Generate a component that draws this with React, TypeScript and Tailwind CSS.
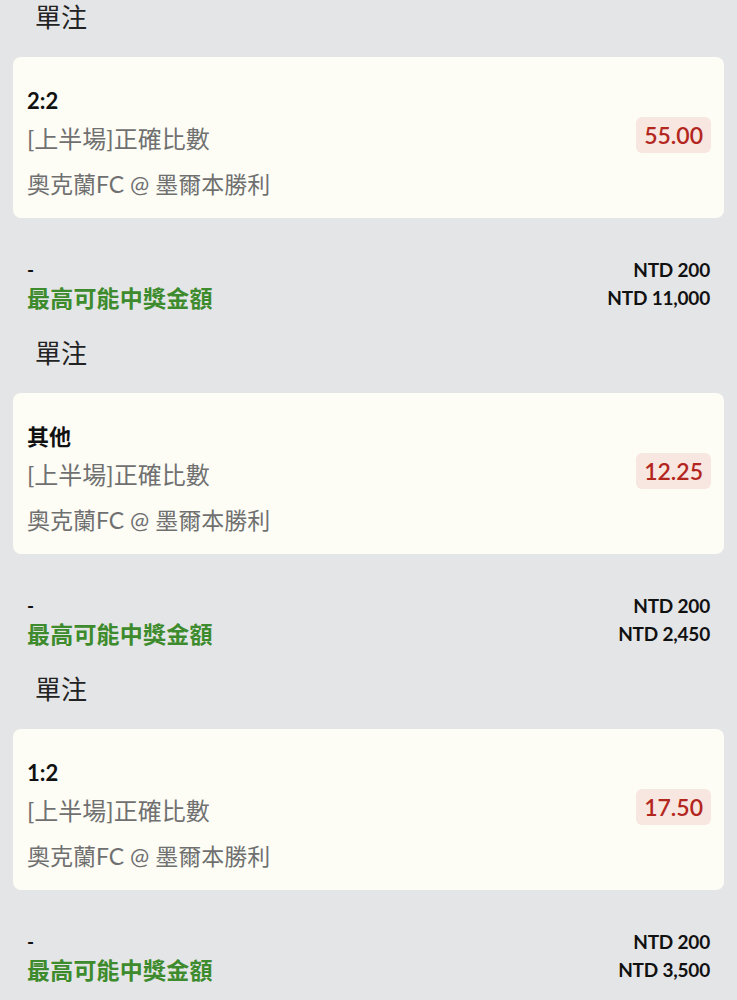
import React from 'react';

interface Bet {
  pick: string;
  market: string;
  match: string;
  odds: string;
  stake: string;
  payout: string;
}

const bets: Bet[] = [
  { pick: '2:2', market: '[上半場]正確比數', match: '奧克蘭FC @ 墨爾本勝利', odds: '55.00', stake: 'NTD 200', payout: 'NTD 11,000' },
  { pick: '其他', market: '[上半場]正確比數', match: '奧克蘭FC @ 墨爾本勝利', odds: '12.25', stake: 'NTD 200', payout: 'NTD 2,450' },
  { pick: '1:2', market: '[上半場]正確比數', match: '奧克蘭FC @ 墨爾本勝利', odds: '17.50', stake: 'NTD 200', payout: 'NTD 3,500' },
];

function BetSection({ bet }: { bet: Bet }) {
  return (
    <div>
      {/* Header */}
      <div className="h-[34px] pl-[35px] text-[26px] leading-[34px] text-[#222]">單注</div>

      {/* Selection card */}
      <div className="mx-[13px] mt-[23px] flex h-[161px] items-center justify-between rounded-lg bg-[#fdfdf6] pl-[14px] pr-[13px]">
        <div className="flex flex-col self-start pt-[29px]">
          <div className="text-[22px] font-bold leading-[30px] text-[#111]">{bet.pick}</div>
          <div className="text-[24px] leading-[46px] text-[#707070]">{bet.market}</div>
          <div className="text-[23px] leading-[44px] text-[#707070]">{bet.match}</div>
        </div>
        <div className="-mt-[6px] rounded-md bg-[#f8e6e0] px-[8px] text-[23px] font-semibold leading-[36px] text-[#b3261e]">
          {bet.odds}
        </div>
      </div>

      {/* Stake / payout */}
      <div className="mt-[38px] px-[27px]">
        <div className="flex h-[28px] items-center justify-between">
          <span className="text-[19px] font-bold text-[#111]">-</span>
          <span className="text-[19px] font-bold tracking-[-0.2px] text-[#111]">{bet.stake}</span>
        </div>
        <div className="flex h-[28px] items-center justify-between">
          <span className="text-[23px] font-bold tracking-[0.2px] text-[#3d8b2c]">最高可能中獎金額</span>
          <span className="text-[19px] font-bold tracking-[-0.2px] text-[#111]">{bet.payout}</span>
        </div>
      </div>
      <div className="h-[24px]" />
    </div>
  );
}

export default function App() {
  return (
    <div
      className="min-h-screen bg-[#e4e5e7]"
      style={{ fontFamily: 'Lato, "Noto Sans CJK TC", sans-serif' }}
    >
      {bets.map((bet, i) => (
        <BetSection key={i} bet={bet} />
      ))}
    </div>
  );
}
